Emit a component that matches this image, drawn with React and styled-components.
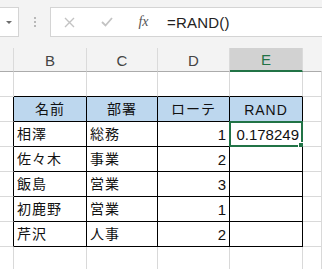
import React from "react"
import styled, { createGlobalStyle } from "styled-components"

const GlobalStyle = createGlobalStyle`
    html, body {
        margin: 0;
        padding: 0;
        background: #ffffff;
        overflow: hidden;
    }
    body {
        font-family: "Liberation Sans", "Noto Sans CJK JP", sans-serif;
    }
`

const Page = styled.div`
    width: 322px;
    height: 269px;
    overflow: hidden;
    background: #ffffff;
`

const Toolbar = styled.div`
    height: 48px;
    background: #f3f3f3;
    display: flex;
    align-items: flex-start;
    padding-top: 7px;
    box-sizing: border-box;
`

const NameBox = styled.div`
    width: 19px;
    height: 30px;
    box-sizing: border-box;
    background: #ffffff;
    border: 1px solid #d4d4d4;
    border-left: none;
    display: flex;
    align-items: center;
    justify-content: flex-end;
    padding-right: 6px;
`

const Caret = styled.div`
    width: 0;
    height: 0;
    border-left: 3px solid transparent;
    border-right: 3px solid transparent;
    border-top: 3px solid #6d6d6d;
`

const Grip = styled.div`
    width: 31px;
    height: 30px;
    display: flex;
    flex-direction: column;
    align-items: center;
    justify-content: center;
    gap: 2px;

    span {
        width: 2px;
        height: 2px;
        background: #b8b8b8;
    }
`

const FormulaBox = styled.div`
    flex: 1;
    height: 30px;
    box-sizing: border-box;
    background: #ffffff;
    border: 1px solid #d4d4d4;
    border-right: none;
    display: flex;
    align-items: center;
`

const IconSlot = styled.div`
    width: 37px;
    height: 28px;
    display: flex;
    align-items: center;
    justify-content: center;
    color: ${p => p.$color || "#c3c3c3"};
`

const Fx = styled.span`
    font-family: "Liberation Serif", serif;
    font-style: italic;
    font-size: 14px;
    color: #555555;
`

const FormulaText = styled.div`
    margin-left: 5px;
    font-size: 15px;
    color: #222222;
    letter-spacing: 0.2px;
`

const Sheet = styled.div`
    display: grid;
    grid-template-columns: 14px 73px 71px 72px 73px 1fr;
    grid-template-rows: 24px repeat(8, 25px);
`

const ColHead = styled.div`
    box-sizing: border-box;
    background: ${p => (p.$active ? "#d2d2d2" : "#f3f3f3")};
    border-right: 1px solid ${p => (p.$last ? "transparent" : "#dadada")};
    border-bottom: ${p => (p.$active ? "2px solid #217346" : "1px solid #ababab")};
    color: ${p => (p.$active ? "#217346" : "#444444")};
    font-size: 15px;
    display: flex;
    align-items: center;
    justify-content: center;
    padding-top: 1px;
`

const Cell = styled.div`
    position: relative;
    box-sizing: border-box;
    border-right: 1px solid ${p => (p.$darkRight ? "#000000" : "#d9d9d9")};
    border-bottom: 1px solid ${p => (p.$darkBottom ? "#000000" : "#d9d9d9")};
    background: ${p => (p.$head ? "#bdd7ee" : "#ffffff")};
    font-family: "Liberation Sans", "Noto Sans CJK JP", sans-serif;
    font-size: ${p => (p.$num ? "15px" : "14px")};
    color: #111111;
    display: flex;
    align-items: flex-end;
    padding: 0 3px 3px 3px;
    justify-content: ${p =>
        p.$head ? "center" : p.$num ? "flex-end" : "flex-start"};
    white-space: nowrap;
    letter-spacing: ${p => (p.$num ? "0" : "1px")};
`

const Selection = styled.div`
    position: absolute;
    left: -1px;
    top: -1px;
    right: -1px;
    bottom: -1px;
    border: 2px solid #217346;
    pointer-events: none;

    &::after {
        content: "";
        position: absolute;
        right: -4px;
        bottom: -4px;
        width: 5px;
        height: 5px;
        background: #217346;
        border: 1px solid #ffffff;
    }
`

const columns = ["", "B", "C", "D", "E", ""]

const rows = [
    null,
    { head: true, values: ["名前", "部署", "ローテ", "RAND"] },
    { values: ["相澤", "総務", "1", "0.178249"] },
    { values: ["佐々木", "事業", "2", ""] },
    { values: ["飯島", "営業", "3", ""] },
    { values: ["初鹿野", "営業", "1", ""] },
    { values: ["芹沢", "人事", "2", ""] },
    null,
]

const isNum = v => /^[0-9.]+$/.test(v)

const App = () => {
    return (
        <Page>
            <GlobalStyle />
            <Toolbar>
                <NameBox>
                    <Caret />
                </NameBox>
                <Grip>
                    <span />
                    <span />
                    <span />
                </Grip>
                <FormulaBox>
                    <IconSlot>
                        <svg width="11" height="11" viewBox="0 0 11 11">
                            <path d="M1 1 L10 10 M10 1 L1 10" stroke="currentColor" strokeWidth="1.4" fill="none" />
                        </svg>
                    </IconSlot>
                    <IconSlot>
                        <svg width="12" height="10" viewBox="0 0 12 10">
                            <path d="M1 5 L4.5 8.5 L11 1" stroke="currentColor" strokeWidth="1.8" fill="none" />
                        </svg>
                    </IconSlot>
                    <IconSlot>
                        <Fx>fx</Fx>
                    </IconSlot>
                    <FormulaText>=RAND()</FormulaText>
                </FormulaBox>
            </Toolbar>
            <Sheet>
                {columns.map((c, i) => (
                    <ColHead key={"h" + i} $active={c === "E"} $last={i === columns.length - 1}>
                        {c}
                    </ColHead>
                ))}
                {rows.map((row, r) => {
                    const nextInTable = rows[r + 1] != null
                    const inTable = row != null
                    return columns.map((c, i) => {
                        const inCols = i >= 1 && i <= 4
                        const value = inTable && inCols ? row.values[i - 1] : ""
                        const darkRight =
                            inTable && (i === 0 || inCols)
                        const darkBottom =
                            inCols && (inTable || (r === 0 && nextInTable))
                        return (
                            <Cell
                                key={r + "-" + i}
                                $darkRight={darkRight}
                                $darkBottom={darkBottom}
                                $head={inTable && inCols && row.head}
                                $num={!row?.head && isNum(value)}
                            >
                                {value}
                                {r === 2 && i === 4 && <Selection />}
                            </Cell>
                        )
                    })
                })}
            </Sheet>
        </Page>
    )
}

export default App
